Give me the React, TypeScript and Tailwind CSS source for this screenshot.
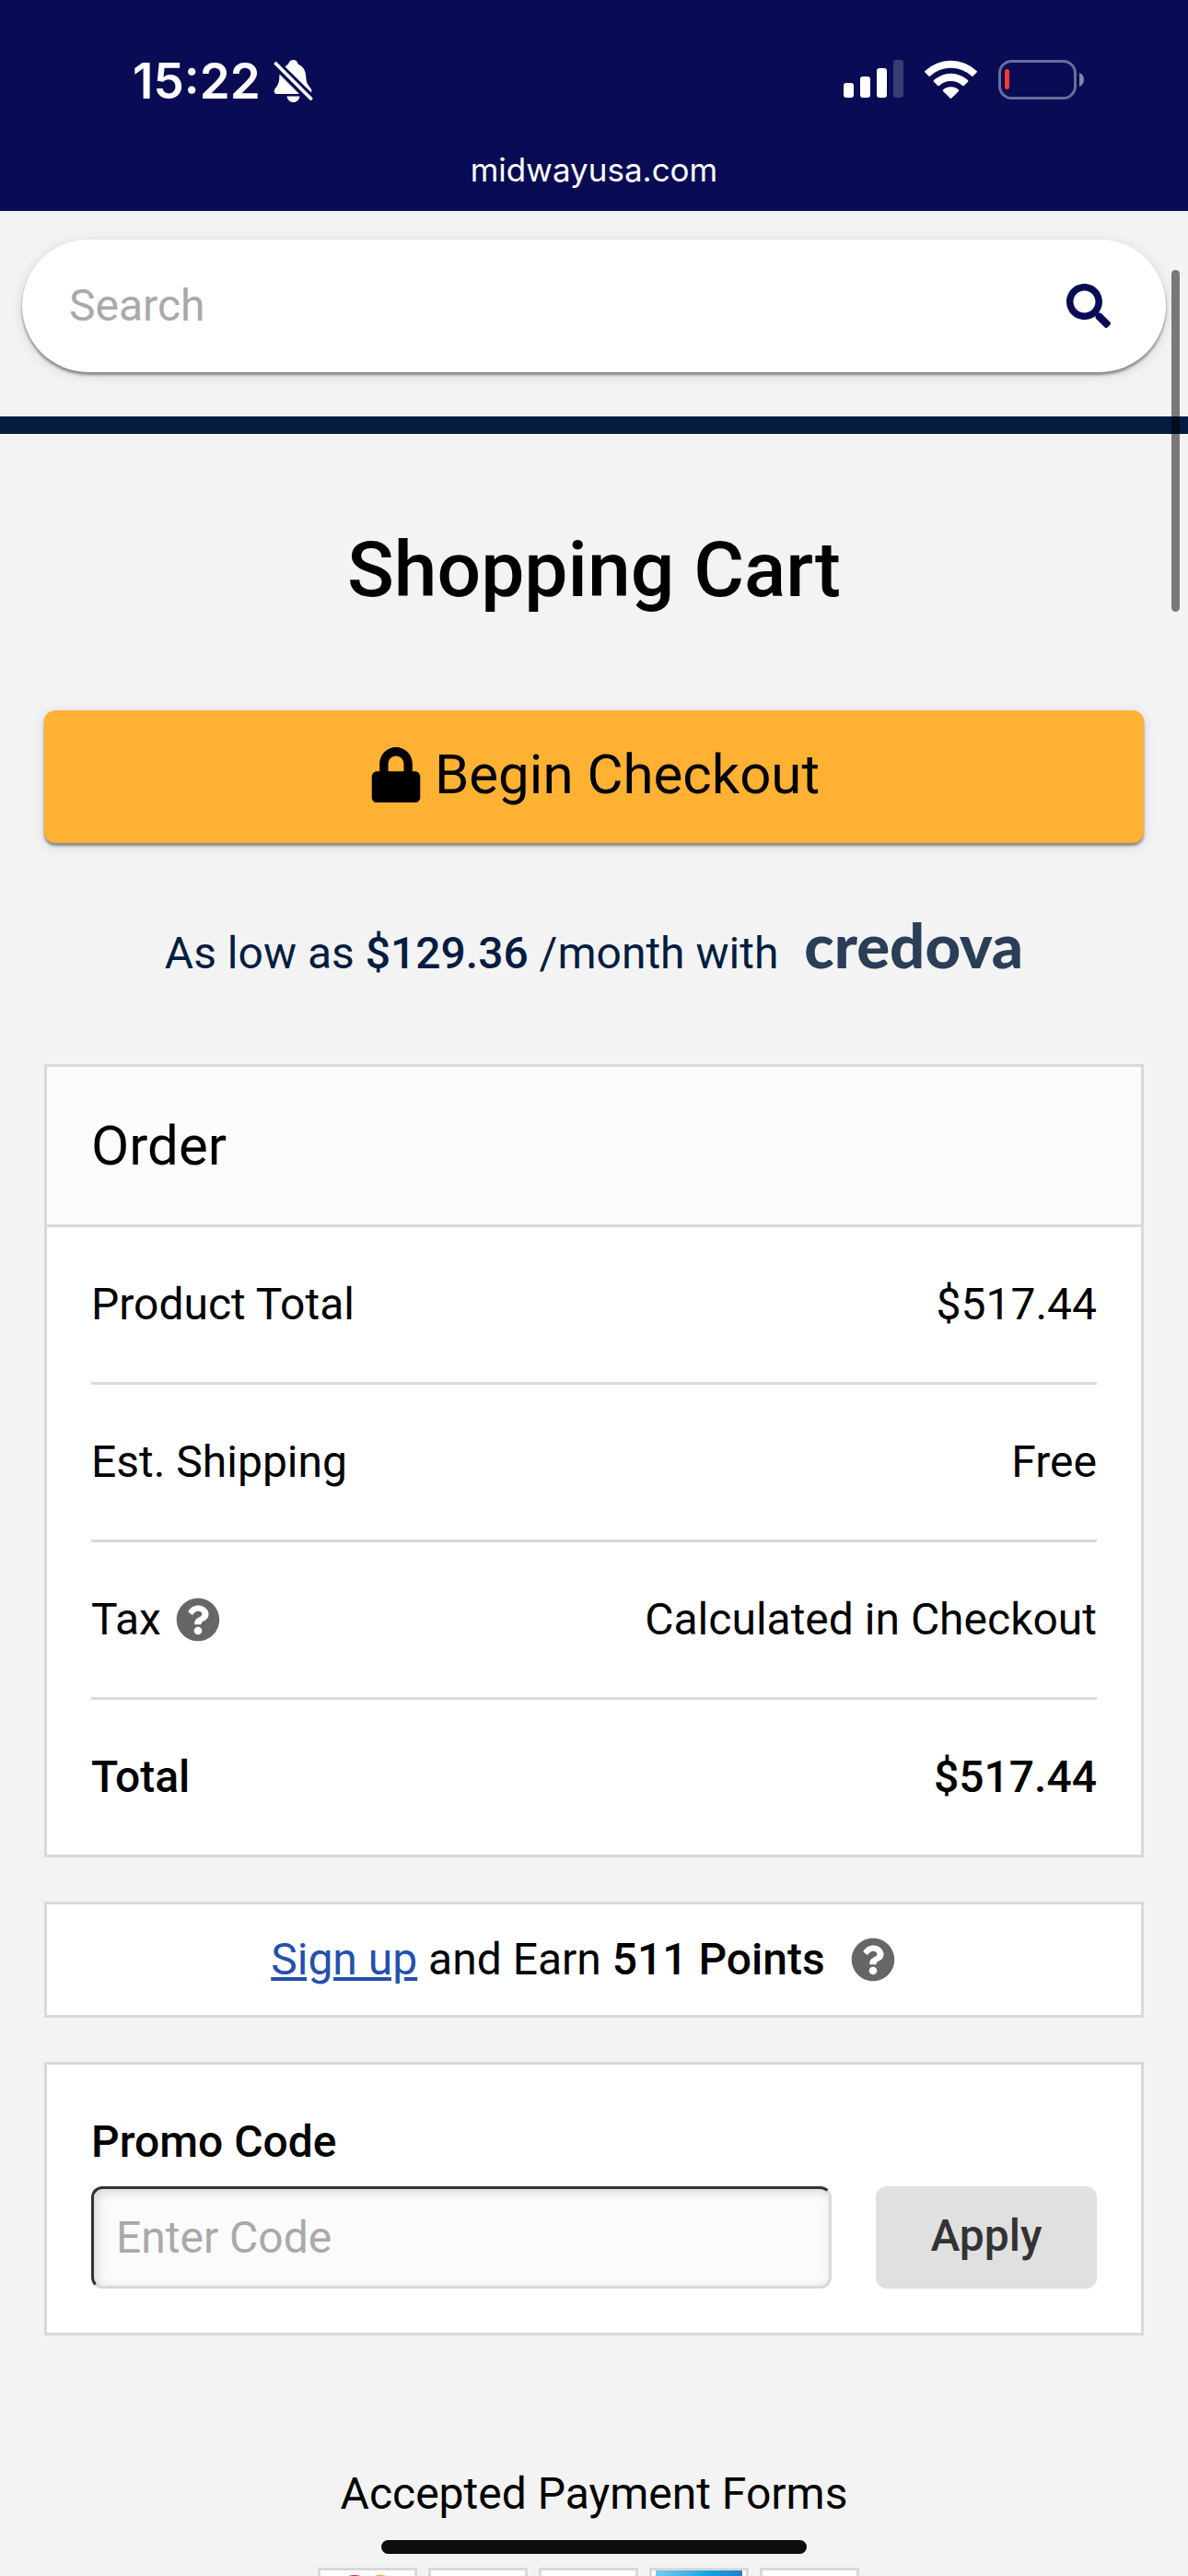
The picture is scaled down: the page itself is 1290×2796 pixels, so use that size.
import { useState } from "react";
import type { ReactNode } from "react";
import { FaLock, FaQuestionCircle, FaSearch } from "react-icons/fa";

interface RowTypes {
  label: ReactNode;
  value: string;
  bold?: boolean;
}

const StatusBar = () => {
  return (
    <header className="bg-[#090c54] text-white font-[Inter,sans-serif] h-[229px] pt-[58px] flex flex-col items-center">
      <div className="w-full flex items-center justify-between pl-36 pr-28 h-14">
        <div className="flex items-center gap-[14px] pt-1">
          <span className="text-[53px] leading-14 font-semibold">15:22</span>
          <svg className="w-[44px] h-[46px]" viewBox="0 0 44 46" fill="currentColor" aria-label="Silent mode">
            <path d="M12.500 7.500C14.500 5.500 15.700 5.200 16.300 4C17.200 1.500 19 0 21.500 0S25.700 1.500 26.500 4C27 5.500 29 5.500 31 7.500C34 10.500 35 14 35.300 19C35.600 25 38 28 40.500 31C41.500 32.200 41.500 33.500 41 35.500Z" />
            <path d="M6.500 15.500L28 37H3.500C0.500 37 0 33.500 1.500 31.500C4.500 28 6 25 6.300 20Z" />
            <path d="M14.500 39.500H28.500C28 43.500 25 46 21.500 46S15 43.500 14.500 39.500Z" />
            <path d="M2.500 4L40.500 42" stroke="currentColor" strokeWidth="3.800" strokeLinecap="round" />
          </svg>
        </div>
        <div className="flex items-center gap-[23px]">
          <svg className="w-[65px] h-[42px]" viewBox="0 0 65 42" fill="currentColor" aria-label="Signal">
            <rect x="0" y="25" width="11" height="16" rx="3" />
            <rect x="18" y="18" width="11" height="23" rx="3" />
            <rect x="36" y="9" width="11" height="32" rx="3" />
            <rect x="54" y="0" width="11" height="41" rx="3" opacity="0.2" />
          </svg>
          <svg className="w-[57px] h-[42px]" viewBox="0 0 57 42" fill="currentColor" aria-label="Wi-Fi">
            <path d="M0.400 13.600Q-0.400 12.700 0.400 11.900A41 41 0 0 1 56.600 11.900Q57.400 12.700 56.600 13.600L52.700 17.500Q51.800 18.300 50.900 17.500A33 33 0 0 0 6.100 17.500Q5.200 18.300 4.300 17.500Z" />
            <path d="M10 23.700Q9.300 22.900 10 22.100A27 27 0 0 1 47 22.100Q47.700 22.900 47 23.700L42.800 27.900Q42 28.600 41.100 27.900A19 19 0 0 0 15.900 27.900Q15 28.600 14.200 27.900Z" />
            <path d="M20 33.900Q19.400 33.100 20.100 32.400A12.500 12.500 0 0 1 36.900 32.400Q37.600 33.100 37 33.900L29.300 41.600Q28.500 42.300 27.700 41.600Z" />
          </svg>
          <svg className="w-[94px] h-[43px]" viewBox="0 0 94 43" aria-label="Battery">
            <rect x="1.500" y="1.500" width="82" height="40" rx="13" fill="none" stroke="#fff" strokeWidth="3" opacity="0.4" />
            <rect x="7" y="10" width="5" height="22" rx="2.500" fill="#ff3830" />
            <path d="M88 14C91.500 15.500 93 18 93 21.500S91.500 27.500 88 29Z" fill="#fff" opacity="0.5" />
          </svg>
        </div>
      </div>
      <span className="mt-[46px] text-[35px] leading-12">midwayusa.com</span>
    </header>
  );
};

const OrderRow = ({ label, value, bold }: RowTypes) => {
  const cell = bold ? "h-[168px] font-medium" : "h-[171px] font-normal border-b-3 border-[#d9d9d9]";
  return (
    <tr>
      <th scope="row" className={`${cell} text-left`}>{label}</th>
      <td className={`${cell} text-right`}>{value}</td>
    </tr>
  );
};

const App = () => {
  const [search, setSearch] = useState("");
  const [promo, setPromo] = useState("");

  return (
    <div className="relative h-screen overflow-hidden bg-[#f3f3f3] text-black text-[48px] leading-14 font-[Roboto,sans-serif]">
      <StatusBar />

      <div className="px-6 pt-[31px] pb-12 border-b-[19px] border-[#021d41]">
        <form
          onSubmit={(e) => e.preventDefault()}
          className="h-36 rounded-full bg-white flex items-center justify-between pl-[51px] pr-[60px] shadow-[0_3px_3px_rgba(0,0,0,0.4),0_3px_15px_rgba(0,0,0,0.12)]"
        >
          <input
            type="text"
            aria-label="Search"
            placeholder="Search"
            value={search}
            onChange={(e) => setSearch(e.target.value)}
            className="grow outline-none placeholder:text-[#a9a9a9]"
          />
          <button type="submit" aria-label="Submit search" className="text-[#090c54]">
            <FaSearch />
          </button>
        </form>
      </div>

      <main className="px-12">
        <h1 className="mt-24 text-center text-[84px] leading-26 font-medium">Shopping Cart</h1>

        <button
          type="button"
          className="mt-25 w-full h-36 pb-1 rounded-xl bg-[#ffb133] flex items-center justify-center gap-3 text-[60px] shadow-[0_3px_3px_rgba(0,0,0,0.4),0_3px_15px_rgba(0,0,0,0.12)]"
        >
          <FaLock />
          Begin Checkout
        </button>

        <p className="mt-[82px] h-[74px] flex items-baseline justify-center gap-7 text-[#021d41]">
          <span>
            As low as <strong className="font-medium">$129.36</strong> /month with
          </span>
          <span className="font-[Lato,sans-serif] font-black text-[67px] text-[#2b3e57]">credova</span>
        </p>

        <section className="mt-21 border-3 border-[#d9d9d9] bg-white">
          <h2 className="h-[174px] px-12 flex items-center bg-[#fbfbfb] border-b-3 border-[#d9d9d9] text-[60px]">Order</h2>
          <div className="px-12">
            <table className="w-full border-separate border-spacing-0">
              <tbody>
                <OrderRow label="Product Total" value="$517.44" />
                <OrderRow label="Est. Shipping" value="Free" />
                <OrderRow
                  label={
                    <span className="flex items-center gap-4">
                      Tax
                      <button type="button" aria-label="About tax" className="text-[#666]">
                        <FaQuestionCircle />
                      </button>
                    </span>
                  }
                  value="Calculated in Checkout"
                />
                <OrderRow label="Total" value="$517.44" bold />
              </tbody>
            </table>
          </div>
        </section>

        <section className="mt-12 h-[126px] border-3 border-[#d9d9d9] bg-white flex items-center justify-center gap-7 pr-6">
          <span>
            <a href="#signup" className="text-[#2450ae] underline">Sign up</a> and Earn{" "}
            <strong className="font-medium">511 Points</strong>
          </span>
          <button type="button" aria-label="About points" className="text-[#666]">
            <FaQuestionCircle />
          </button>
        </section>

        <form onSubmit={(e) => e.preventDefault()} className="mt-12 border-3 border-[#d9d9d9] bg-white px-12 pt-14 pb-12">
          <label htmlFor="promo" className="block font-medium">Promo Code</label>
          <div className="mt-5 flex gap-12">
            <input
              id="promo"
              type="text"
              placeholder="Enter Code"
              value={promo}
              onChange={(e) => setPromo(e.target.value)}
              className="grow min-w-0 h-[111px] px-6 rounded-xl border-3 border-t-[#333] border-l-[#333] border-r-[#d9d9d9] border-b-[#d9d9d9] bg-[#fbfbfb] outline-none shadow-[inset_3px_3px_12px_rgba(0,0,0,0.15)] placeholder:text-[#a9a9a9]"
            />
            <button type="submit" className="w-60 h-[111px] pb-1 rounded-xl bg-[#e0e0e0] text-[#333] font-medium">Apply</button>
          </div>
        </form>

        <h3 className="mt-36 text-center">Accepted Payment Forms</h3>
        <ul className="mt-13 flex justify-center">
          <li className="w-27 h-18 mr-3 border-3 border-[#d9d9d9] bg-white flex justify-center pt-1">
            <svg className="w-18 h-12" viewBox="0 0 72 48" aria-label="Mastercard">
              <circle cx="22" cy="23" r="22" fill="#cc1f2d" />
              <circle cx="50" cy="23" r="22" fill="#f5a01e" />
            </svg>
          </li>
          <li className="w-27 h-18 mr-3 border-3 border-[#d9d9d9] bg-white" />
          <li className="w-27 h-18 mr-3 border-3 border-[#d9d9d9] bg-white" />
          <li className="w-27 h-18 mr-3 border-3 border-[#d9d9d9] bg-white px-1">
            <div className="h-full bg-linear-to-r from-[#74c8f2] via-[#0ba5e1] via-60% to-[#2480c8]" />
          </li>
          <li className="w-27 h-18 mr-3 border-3 border-[#d9d9d9] bg-white" />
        </ul>
      </main>

      {/* scroll thumb and home indicator float over the page */}
      <div className="absolute right-[9px] top-[293px] w-[9px] h-[371px] rounded-full bg-black/50" />
      <div className="absolute inset-x-0 bottom-6 flex justify-center">
        <div className="w-[462px] h-[15px] rounded-full bg-[#0d0d0d]" />
      </div>
    </div>
  );
};

export default App;
